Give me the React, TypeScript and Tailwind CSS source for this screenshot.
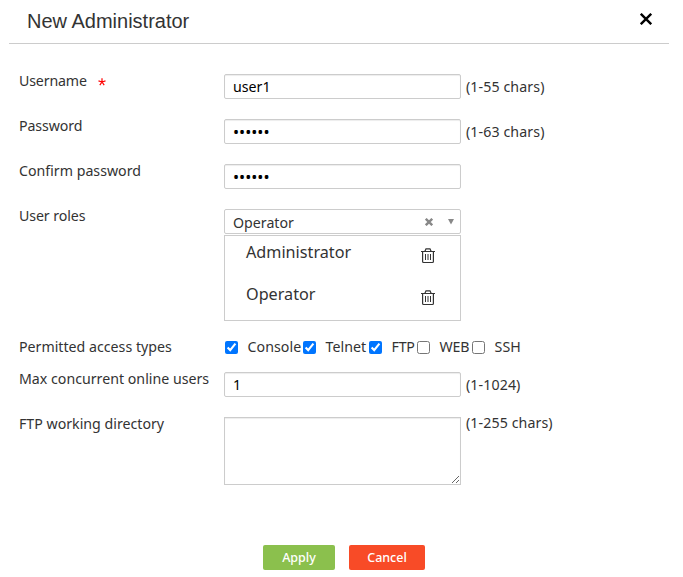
import { useState, type ReactNode } from "react";

interface AccessType {
  name: string;
  checked: boolean;
  width: string;
  text: string;
}

const accessTypes: AccessType[] = [
  { name: "Console", checked: true, width: "w-[78px]", text: "tracking-[0.05px]" },
  { name: "Telnet", checked: true, width: "w-[66px]", text: "tracking-[0.05px]" },
  { name: "FTP", checked: true, width: "w-12", text: "tracking-[-0.2px]" },
  { name: "WEB", checked: false, width: "w-[55px]", text: "tracking-[-0.2px]" },
  { name: "SSH", checked: false, width: "w-[60px]", text: "tracking-[0.1px]" },
];

const inputClass =
  "block h-[25px] w-[237px] shrink-0 rounded-[2px] border border-[#ccc] bg-white px-2 text-black shadow-[inset_0_1px_1px_rgba(0,0,0,0.075)] outline-none";

interface RowProps {
  label: string;
  labelClass?: string;
  className: string;
  required?: boolean;
  hint?: string;
  hintClass?: string;
  children: ReactNode;
}

function Row({ label, labelClass, className, required, hint, hintClass = "pt-[3px]", children }: RowProps) {
  return (
    <div className={`flex items-start ${className}`}>
      <div className="flex w-[205px] shrink-0 whitespace-nowrap leading-5">
        <span className={labelClass}>{label}</span>
        {required && (
          <svg width="8" height="8" viewBox="0 0 8 8" className="ml-[11px] mt-1" stroke="#f00" strokeWidth="1.2" fill="none">
            <path d="M4 0.2V4M4 4L0.5 2.9M4 4L7.5 2.9M4 4L1.8 7.2M4 4L6.2 7.2" />
          </svg>
        )}
      </div>
      {children}
      {hint && <span className={`ml-[5px] whitespace-nowrap leading-5 tracking-[0.1px] ${hintClass}`}>{hint}</span>}
    </div>
  );
}

function TrashIcon() {
  return (
    <svg width="14" height="16" viewBox="0 0 14 16" fill="none" stroke="#333" strokeWidth="1.2">
      <path d="M0 3.5h14M3.8 3.5L5 0.8h4l1.2 2.7M1.6 3.5v10q0 1 1 1h8.8q1 0 1-1v-10" />
      <path d="M4.5 6v6M7 6v6M9.5 6v6" strokeWidth="1" />
    </svg>
  );
}

export default function App() {
  const [access, setAccess] = useState(accessTypes);

  function toggle(name: string) {
    setAccess((prev) => prev.map((a) => (a.name === name ? { ...a, checked: !a.checked } : a)));
  }

  return (
    <div className="h-[577px] w-[683px] overflow-hidden bg-white font-['Noto_Sans',sans-serif] text-[14.2px] text-[#333]">
      {/* Header */}
      <div className="ml-[9px] flex h-11 w-[660px] items-start justify-between border-b border-[#ccc] pl-[18px] pr-[17px]">
        <h1 className="pt-[9px] font-['Liberation_Sans',sans-serif] text-[20px] leading-6">New Administrator</h1>
        <svg width="12" height="12" viewBox="0 0 12 12" className="mt-[13px]" stroke="#000" strokeWidth="2.4">
          <path d="M0.8 0.8L11.2 11.2M11.2 0.8L0.8 11.2" />
        </svg>
      </div>

      {/* Form */}
      <div className="flex flex-col pl-[19px] pt-[30px]">
        <Row label="Username" required className="h-[45px]" labelClass="-mt-[3px] tracking-[-0.15px]" hint="(1-55 chars)">
          <input className={inputClass} defaultValue="user1" />
        </Row>
        <Row label="Password" className="h-[45px]" labelClass="-mt-[3px] tracking-[-0.1px]" hint="(1-63 chars)">
          <input type="password" className={`${inputClass} text-[16.2px]`} defaultValue="secret" />
        </Row>
        <Row label="Confirm password" className="h-[45px]" labelClass="-mt-[3px]">
          <input type="password" className={`${inputClass} text-[16.2px]`} defaultValue="secret" />
        </Row>
        <Row label="User roles" className="h-[128px]" labelClass="-mt-[3px] tracking-[-0.1px]">
          <div className="w-[237px]">
            <div className="flex h-[25px] items-center rounded-[2px] border border-[#ccc] pl-2 pr-[5px]">
              <span className="flex-1 pt-0.5">Operator</span>
              <svg width="8" height="8" viewBox="0 0 8 8" stroke="#888" strokeWidth="2.4">
                <path d="M0.8 0.8L7.2 7.2M7.2 0.8L0.8 7.2" />
              </svg>
              <svg width="8" height="6" viewBox="0 0 8 6" className="ml-[14px]" fill="#888">
                <path d="M1 0h6L4 5.5z" />
              </svg>
            </div>
            <div className="mt-px h-[86px] border border-[#ccc] pl-[21px] pr-[25px] text-[16.2px] leading-6">
              <div className="flex h-[42px] justify-between">
                <span className="pt-1">Administrator</span>
                <span className="pt-3">
                  <TrashIcon />
                </span>
              </div>
              <div className="flex h-[42px] justify-between">
                <span className="pt-1">Operator</span>
                <span className="pt-3">
                  <TrashIcon />
                </span>
              </div>
            </div>
          </div>
        </Row>
        <Row label="Permitted access types" className="h-[35px]">
          <div className="flex">
            {access.map((a) => (
              <label key={a.name} className={`flex items-start leading-5 ${a.width}`}>
                <input
                  type="checkbox"
                  className="ml-px mt-1 h-[13px] w-[13px] shrink-0"
                  checked={a.checked}
                  onChange={() => toggle(a.name)}
                />
                <span className={`ml-[9.5px] ${a.text}`}>{a.name}</span>
              </label>
            ))}
          </div>
        </Row>
        <Row label="Max concurrent online users" className="h-[45px]" labelClass="-mt-[3px]" hint="(1-1024)">
          <input className={inputClass} defaultValue="1" />
        </Row>
        <Row label="FTP working directory" className="h-[128px]" labelClass="-mt-[3px]" hint="(1-255 chars)" hintClass="-mt-1">
          <textarea className="block h-[68px] w-[237px] shrink-0 border border-[#ccc] shadow-[inset_0_1px_1px_rgba(0,0,0,0.075)] outline-none" />
        </Row>
      </div>

      {/* Actions */}
      <div className="flex gap-[14px] pl-[263px] text-[12.5px] font-medium text-white">
        <button className="h-[25px] w-[72px] rounded-[2px] bg-[#8bc04d] pt-0.5">Apply</button>
        <button className="h-[25px] w-[76px] rounded-[2px] bg-[#f84b27] pt-0.5">Cancel</button>
      </div>
    </div>
  );
}
